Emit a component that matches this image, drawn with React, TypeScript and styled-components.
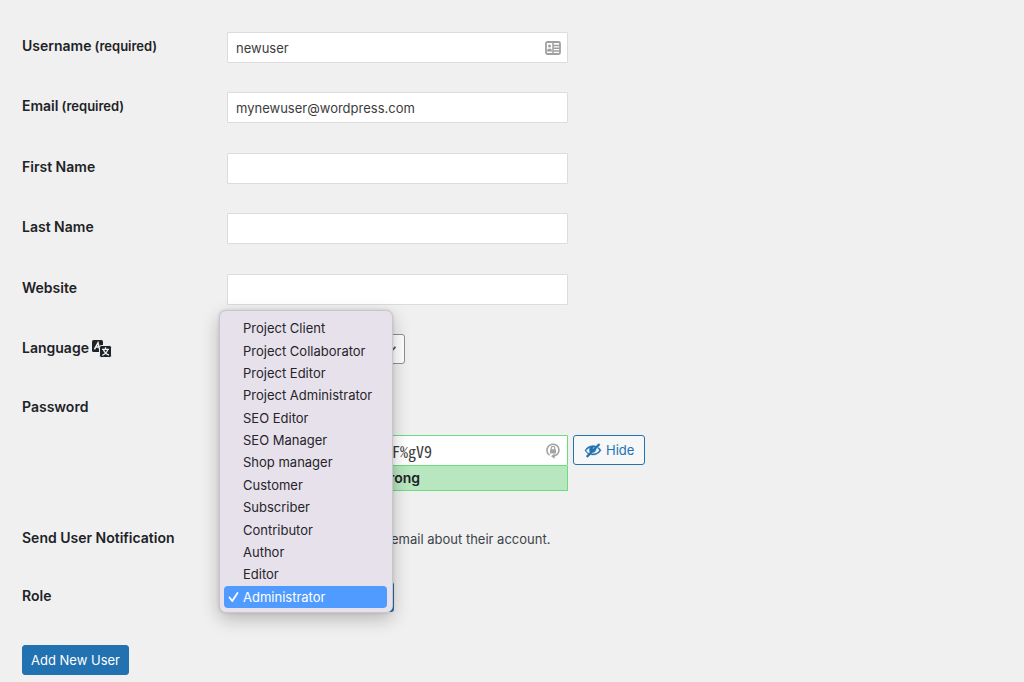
import React from "react";
import styled, { createGlobalStyle } from "styled-components";

const GlobalStyle = createGlobalStyle`
  * { box-sizing: border-box; }
  body { margin: 0; background: #f0f0f0; color: #3c434a; font: 13px/20px Inter, "Liberation Sans", sans-serif; }
  input, select, button { font: inherit; margin: 0; }
`;

const Form = styled.form`
  padding: 17px 22px 0;
`;

const FieldGrid = styled.div`
  display: grid;
  grid-auto-rows: 1fr;
  min-height: 302px;
`;

const Row = styled.div<{ $top?: number; $bottom?: number }>`
  display: grid;
  grid-template-columns: 205px minmax(0, 1fr);
  align-items: start;
  padding-top: ${(p) => p.$top ?? 15}px;
  padding-bottom: ${(p) => p.$bottom ?? 14}px;
`;

const Actions = styled.div`
  padding: 19px 0 8px;
`;

const Label = styled.label`
  display: flex;
  align-items: center;
  gap: 3px;
  padding-top: 4px;
  font-size: 14px;
  font-weight: 600;
  color: #1d2327;
`;

const Small = styled.span`
  font-size: 13px;
`;

const InputWrap = styled.div`
  position: relative;
  width: 100%;
  max-width: 341px;
`;

const TextInput = styled.input`
  display: block;
  width: 100%;
  height: 31px;
  padding: 0 8px;
  border: 1px solid #dcdcde;
  border-radius: 1px;
  background: #fff;
  color: #3c3c3c;
`;

const FieldIcon = styled.span`
  position: absolute;
  top: 0;
  right: 7px;
  height: 31px;
  display: flex;
  align-items: center;
`;

const SelectWrap = styled.div<{ $width: number }>`
  position: relative;
  width: ${(p) => p.$width}px;
`;

const Select = styled.select<{ $focused?: boolean }>`
  display: block;
  width: 100%;
  height: 30px;
  padding: 0 24px 0 8px;
  appearance: none;
  border: ${(p) => (p.$focused ? "2px solid #2271b1" : "1px solid #8c8f94")};
  border-radius: 3px;
  background: #fff;
  color: #2c3338;
`;

const Chevron = styled.svg`
  position: absolute;
  right: 6px;
  top: 8px;
  pointer-events: none;
`;

const PasswordLine = styled.div`
  display: flex;
  align-items: flex-start;
  gap: 5px;
  padding-top: 42px;
`;

const PasswordInput = styled(TextInput)`
  padding-left: 12px;
  border-color: #68de7c;
  font-family: "Noto Sans Mono CJK SC", "DejaVu Sans Mono", monospace;
  font-size: 16px;
`;

const Strength = styled.div`
  height: 25px;
  border: 1px solid #68de7c;
  border-top: 0;
  background: #b8e6bf;
  color: #1d2327;
  font-size: 14px;
  font-weight: 600;
  line-height: 24px;
  text-align: center;
`;

const Button = styled.button<{ $primary?: boolean }>`
  display: inline-flex;
  align-items: center;
  gap: 4px;
  height: 30px;
  padding: 0 ${(p) => (p.$primary ? 8 : 10)}px;
  border: 1px solid #2271b1;
  border-radius: 3px;
  background: ${(p) => (p.$primary ? "#2271b1" : "#f6f7f7")};
  color: ${(p) => (p.$primary ? "#fff" : "#2271b1")};
  white-space: nowrap;
`;

const CheckLabel = styled.label`
  display: flex;
  align-items: center;
  gap: 14px;
  padding-top: 5px;
`;

const Menu = styled.ul`
  position: absolute;
  left: -8px;
  bottom: -1px;
  z-index: 2;
  width: 174px;
  height: 303px;
  margin: 0;
  padding: 6px 5px 4px 4px;
  display: grid;
  grid-auto-rows: 1fr;
  list-style: none;
  border: 1px solid #c9c5cc;
  border-radius: 7px;
  background: #e7e1ec;
  box-shadow: 0 6px 18px rgba(0, 0, 0, 0.24), 0 0 3px rgba(0, 0, 0, 0.14);
`;

const Option = styled.li<{ $selected: boolean }>`
  display: grid;
  grid-template-columns: 19px 1fr;
  align-items: center;
  border-radius: 4px;
  background: ${(p) => (p.$selected ? "#4f9bff" : "transparent")};
  color: ${(p) => (p.$selected ? "#fff" : "#262428")};
  white-space: nowrap;
`;

const Tick = styled.span`
  display: flex;
  justify-content: center;
`;

const roles = [
  "Project Client",
  "Project Collaborator",
  "Project Editor",
  "Project Administrator",
  "SEO Editor",
  "SEO Manager",
  "Shop manager",
  "Customer",
  "Subscriber",
  "Contributor",
  "Author",
  "Editor",
  "Administrator",
];

const fields = [
  { id: "username", label: "Username", required: true, value: "newuser" },
  { id: "email", label: "Email", required: true, value: "mynewuser@wordpress.com" },
  { id: "first", label: "First Name", required: false, value: "" },
  { id: "last", label: "Last Name", required: false, value: "" },
  { id: "website", label: "Website", required: false, value: "" },
];

const CardIcon = () => (
  <svg width="16" height="14" viewBox="0 0 16 14" aria-hidden="true">
    <rect x="1" y="1" width="14" height="12" rx="1.5" fill="#fff" stroke="#a0a0a0" strokeWidth="1.8" />
    <path d="M8 1v12M8 4.400h7M8 7.200h7M8 10h7" stroke="#a0a0a0" strokeWidth="1.500" />
    <circle cx="4.500" cy="5" r="1.500" fill="#a0a0a0" />
    <path d="M2 10.500c0-2.400 1-3.100 2.500-3.100s2.500.7 2.500 3.100z" fill="#a0a0a0" />
  </svg>
);

const LockIcon = () => (
  <svg width="16" height="18" viewBox="0 0 16 18" fill="none" aria-hidden="true">
    <path d="M4.600 13.200A6 6 0 1 1 12.600 12Q11.200 13.600 8.400 14" stroke="#a3a3a3" strokeWidth="1.600" />
    <path d="M9.600 11.600v5.200l-3.600-2.600z" fill="#a3a3a3" />
    <rect x="5" y="7.200" width="6" height="4.200" rx=".5" fill="#a3a3a3" />
    <path d="M6.300 7.400V6a1.700 1.700 0 0 1 3.400 0v1.400" stroke="#a3a3a3" strokeWidth="1.200" />
  </svg>
);

const HiddenIcon = () => (
  <svg width="18" height="18" viewBox="0 0 20 20" fill="#2271b1" stroke="#2271b1" strokeWidth=".4" aria-hidden="true">
    <path d="M17.3 3.3c-.4-.4-1.1-.4-1.6 0l-2.4 2.4C12.3 5.3 11.2 5.1 10 5.1c-3.8.1-7.2 2.1-9 5.4.2.4.5.8.8 1.2.8 1.1 1.8 2 2.9 2.7L3 16.1c-.4.4-.5 1.1 0 1.6.4.4 1.1.5 1.6 0L17.3 4.9c.4-.5.4-1.2 0-1.6zm-10.600 9l-1.300 1.300c-1.200-.7-2.300-1.700-3.100-2.900C3.500 9 5.100 7.800 7 7.200c-1.300 1.400-1.400 3.600-.3 5.100zM10.100 9c-.5-.5-.4-1.300.1-1.800.5-.4 1.200-.4 1.700 0L10.100 9zm8.200.5c-.5-.9-1.100-1.700-1.900-2.400l-1 1c.7.600 1.300 1.400 1.800 2.200-1.500 2.500-4.200 4-7.200 4-.5 0-.9 0-1.400-.1l-1.100 1.100c.8.200 1.600.3 2.500.3 3.700-.1 7.100-2 9-5.300-.2-.3-.4-.5-.7-.8zm-5-.3l-3.500 3.600c2 0 3.600-1.600 3.500-3.600z" />
  </svg>
);

const LanguageIcon = () => (
  <svg width="20" height="20" viewBox="0 -2 20 20" aria-hidden="true">
    <rect x="0" y="0" width="11" height="12" rx="1.500" fill="#1d2327" />
    <path d="M2.400 9.300L6 2.800L7.600 9.300M3.800 7H7.200" fill="none" stroke="#f0f0f0" strokeWidth="1.500" />
    <rect x="7.500" y="5.500" width="12" height="12" rx="1.800" fill="#1d2327" stroke="#f0f0f0" />
    <path d="M13.500 7.300v2M10 9.400h7M15.700 9.600Q14.500 13.600 10.300 15.300M11.400 9.600Q12.700 13.400 17 15.200" fill="none" stroke="#f0f0f0" strokeWidth="1.300" />
  </svg>
);

const ChevronIcon = () => (
  <Chevron width="14" height="14" viewBox="0 0 20 20" aria-hidden="true">
    <path d="M5 7l5 5 5-5" fill="none" stroke="#50575e" strokeWidth="2.5" />
  </Chevron>
);

export default function App() {
  const [role, setRole] = React.useState("Administrator");
  return (
    <>
      <GlobalStyle />
      <Form onSubmit={(e) => e.preventDefault()}>
        <FieldGrid>
          {fields.map((f) => (
            <Row key={f.id}>
              <Label htmlFor={f.id}>
                {f.label}
                {f.required && <Small>(required)</Small>}
              </Label>
              <InputWrap>
                <TextInput id={f.id} type="text" defaultValue={f.value} />
                {f.id === "username" && (
                  <FieldIcon>
                    <CardIcon />
                  </FieldIcon>
                )}
              </InputWrap>
            </Row>
          ))}
        </FieldGrid>
        <Row $bottom={15}>
          <Label htmlFor="language">
            Language <LanguageIcon />
          </Label>
          <SelectWrap $width={178}>
            <Select id="language">
              <option>Site Default</option>
            </Select>
            <ChevronIcon />
          </SelectWrap>
        </Row>
        <Row $top={14}>
          <Label htmlFor="password">Password</Label>
          <PasswordLine>
            <InputWrap>
              <PasswordInput id="password" type="text" defaultValue="k7Rw2Zp9xQm4TbL8sDhF%gV9" />
              <FieldIcon>
                <LockIcon />
              </FieldIcon>
              <Strength>Strong</Strength>
            </InputWrap>
            <Button type="button">
              <HiddenIcon />
              Hide
            </Button>
          </PasswordLine>
        </Row>
        <Row $top={19} $bottom={19}>
          <Label htmlFor="notify">Send User Notification</Label>
          <CheckLabel>
            <input id="notify" type="checkbox" defaultChecked />
            Send the new user an email about their account.
          </CheckLabel>
        </Row>
        <Row $top={14}>
          <Label htmlFor="role">Role</Label>
          <SelectWrap $width={167}>
            <Select id="role" $focused value={role} onChange={(e) => setRole(e.target.value)}>
              {roles.map((r) => (
                <option key={r}>{r}</option>
              ))}
            </Select>
            <Menu role="listbox" aria-label="Role">
              {roles.map((r) => (
                <Option key={r} role="option" aria-selected={r === role} $selected={r === role} onClick={() => setRole(r)}>
                  <Tick>
                    {r === role && (
                      <svg width="11" height="12" viewBox="0 0 11 12" aria-hidden="true">
                        <path d="M1.500 6.500L4.300 10L9.500 2" fill="none" stroke="#fff" strokeWidth="1.800" strokeLinecap="round" strokeLinejoin="round" />
                      </svg>
                    )}
                  </Tick>
                  {r}
                </Option>
              ))}
            </Menu>
          </SelectWrap>
        </Row>
        <Actions>
          <Button type="submit" $primary>
            Add New User
          </Button>
        </Actions>
      </Form>
    </>
  );
}
